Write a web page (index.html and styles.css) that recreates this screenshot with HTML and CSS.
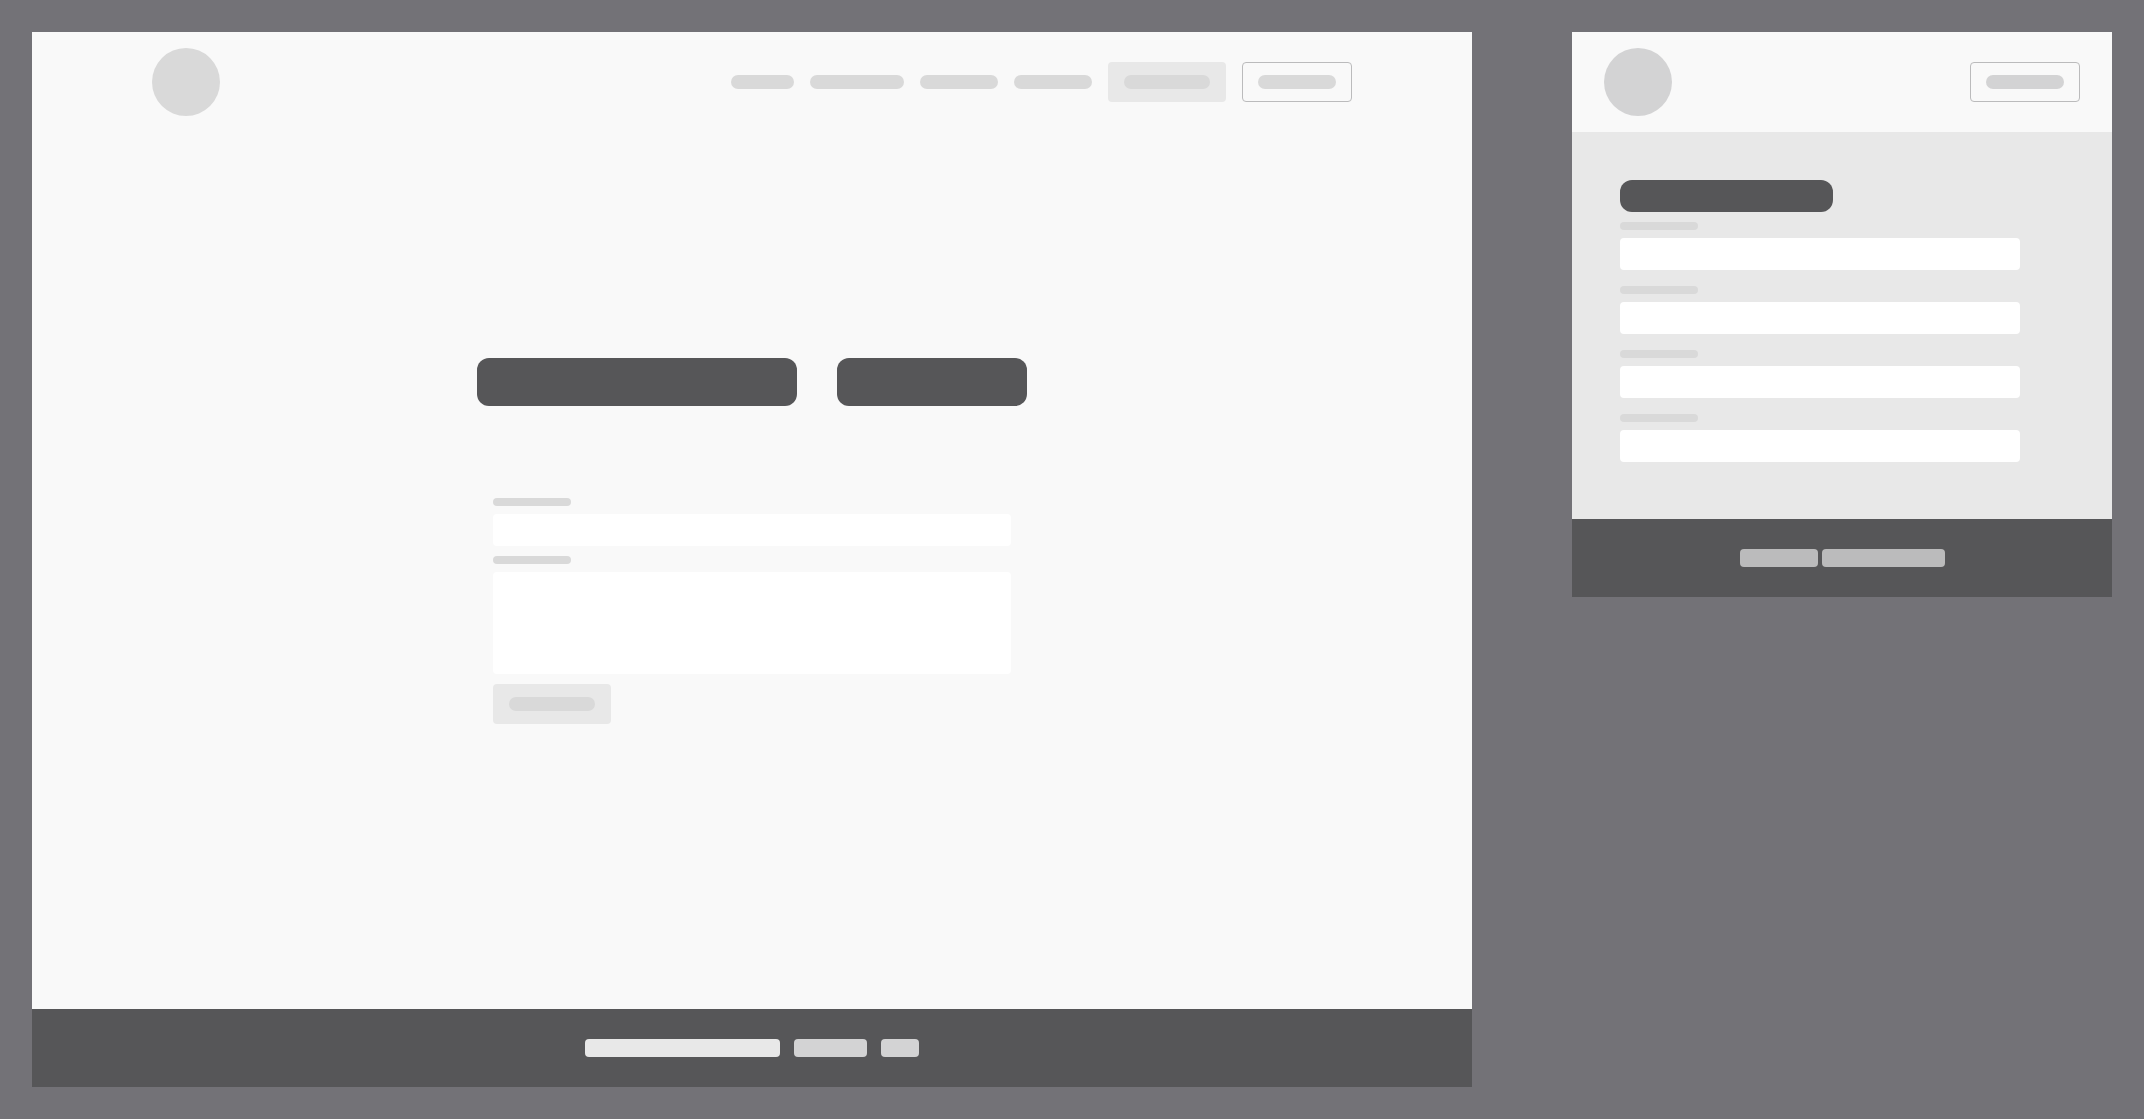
FILE: index.html
```html
<!DOCTYPE html>
<html lang="en">
<head>
<meta charset="utf-8">
<meta name="viewport" content="width=device-width, initial-scale=1">
<title>Contact form wireframe</title>
<link rel="stylesheet" href="styles.css">
</head>
<body>
<div class="board">
  <section class="screen screen-desktop" aria-label="Desktop">
    <header class="header header-wide">
      <a class="logo" href="#" aria-label="Home"></a>
      <nav class="nav" aria-label="Main">
        <a class="bar bar-short" href="#" aria-label="First link"></a>
        <a class="bar bar-long" href="#" aria-label="Second link"></a>
        <a class="bar" href="#" aria-label="Third link"></a>
        <a class="bar" href="#" aria-label="Fourth link"></a>
        <button class="button button-filled" type="button" aria-label="Primary action"><span class="bar bar-button"></span></button>
        <button class="button button-outline" type="button" aria-label="Secondary action"><span class="bar"></span></button>
      </nav>
    </header>
    <main class="content">
      <div class="headings">
        <div class="heading heading-main"></div>
        <div class="heading heading-side"></div>
      </div>
      <form class="form">
        <div class="field">
          <label class="label" for="subject" aria-label="Subject"></label>
          <input class="input" id="subject" type="text">
        </div>
        <div class="field">
          <label class="label" for="message" aria-label="Message"></label>
          <textarea class="input input-area" id="message"></textarea>
        </div>
        <button class="button button-filled" type="button" aria-label="Send"><span class="bar bar-button"></span></button>
      </form>
    </main>
    <footer class="footer">
      <span class="tag tag-wide"></span>
      <a class="tag tag-medium" href="#" aria-label="Footer link"></a>
      <a class="tag tag-small" href="#" aria-label="Footer link"></a>
    </footer>
  </section>

  <section class="screen screen-mobile" aria-label="Mobile">
    <header class="header">
      <a class="logo" href="#" aria-label="Home"></a>
      <button class="button button-outline" type="button" aria-label="Menu"><span class="bar"></span></button>
    </header>
    <div class="panel">
      <div class="heading heading-small"></div>
      <form class="form-stack">
        <div class="field">
          <label class="label" for="field-1" aria-label="First field"></label>
          <input class="input" id="field-1" type="text">
        </div>
        <div class="field">
          <label class="label" for="field-2" aria-label="Second field"></label>
          <input class="input" id="field-2" type="text">
        </div>
        <div class="field">
          <label class="label" for="field-3" aria-label="Third field"></label>
          <input class="input" id="field-3" type="text">
        </div>
        <div class="field">
          <label class="label" for="field-4" aria-label="Fourth field"></label>
          <input class="input" id="field-4" type="text">
        </div>
      </form>
    </div>
    <footer class="footer">
      <a class="tag tag-link" href="#" aria-label="Footer link"></a>
      <a class="tag tag-link-long" href="#" aria-label="Footer link"></a>
    </footer>
  </section>
</div>
</body>
</html>
```
FILE: styles.css
```css
:root {
  --backdrop: #737277;
  --surface: #f9f9f9;
  --panel: #e8e8e8;
  --dark: #565658;
  --mark: #d9d9d9;
  --line: #bbbbbc;
}

* {
  box-sizing: border-box;
}

body {
  margin: 0;
  background: var(--backdrop);
  font-family: "Liberation Sans", sans-serif;
}

.board {
  display: grid;
  grid-template-columns: 8fr 3fr;
  gap: 100px;
  align-items: start;
  min-height: 100vh;
  padding: 32px;
}

.screen {
  display: flex;
  flex-direction: column;
  background: var(--surface);
}

.screen-desktop {
  align-self: stretch;
}

.screen-mobile {
  --mark: #d3d3d4;
}

.header {
  display: flex;
  align-items: center;
  justify-content: space-between;
  padding: 16px 32px;
}

.header-wide {
  padding: 16px 120px;
}

.logo {
  width: 68px;
  height: 68px;
  border-radius: 50%;
  background: var(--mark);
}

.nav {
  display: flex;
  align-items: center;
  gap: 16px;
}

.bar {
  display: block;
  width: 78px;
  height: 14px;
  border-radius: 7px;
  background: var(--mark);
}

.bar-short {
  width: 63px;
}

.bar-long {
  width: 94px;
}

.bar-button {
  width: 86px;
}

.button {
  display: flex;
  align-items: center;
  justify-content: center;
  height: 40px;
  padding: 0 16px;
  border: 0;
  border-radius: 4px;
  background: none;
}

.button-filled {
  background: var(--panel);
}

.button-outline {
  padding: 0 15px;
  border: 1px solid var(--line);
}

.content {
  display: flex;
  flex: 1;
  flex-direction: column;
  align-items: center;
  justify-content: center;
  gap: 32px;
}

.headings {
  display: flex;
  gap: 40px;
}

.heading {
  height: 48px;
  border-radius: 12px;
  background: var(--dark);
}

.heading-main {
  width: 320px;
}

.heading-side {
  width: 190px;
}

.heading-small {
  width: 213px;
  height: 32px;
}

.form {
  display: flex;
  flex-direction: column;
  align-items: flex-start;
  gap: 10px;
  width: 550px;
  padding: 60px 16px;
}

.field {
  display: flex;
  flex-direction: column;
  gap: 8px;
  width: 100%;
}

.label {
  width: 78px;
  height: 8px;
  border-radius: 4px;
  background: #d9d9d9;
}

.input {
  display: block;
  width: 100%;
  height: 32px;
  margin: 0;
  padding: 0 8px;
  border: 0;
  border-radius: 4px;
  background: #ffffff;
}

.input-area {
  height: 102px;
  padding: 8px;
  resize: none;
}

.panel {
  display: flex;
  flex-direction: column;
  gap: 10px;
  padding: 48px 48px 57px;
  background: var(--panel);
}

.form-stack {
  display: flex;
  flex-direction: column;
  gap: 16px;
  max-width: 400px;
}

.footer {
  display: flex;
  justify-content: center;
  gap: 14px;
  padding: 30px;
  background: var(--dark);
}

.screen-mobile .footer {
  gap: 4px;
}

.tag {
  height: 18px;
  border-radius: 4px;
  background: #d3d3d4;
}

.tag-wide {
  width: 195px;
  background: var(--panel);
}

.tag-medium {
  width: 73px;
}

.tag-small {
  width: 38px;
}

.tag-link {
  width: 78px;
  background: var(--line);
}

.tag-link-long {
  width: 123px;
  background: var(--line);
}
```
